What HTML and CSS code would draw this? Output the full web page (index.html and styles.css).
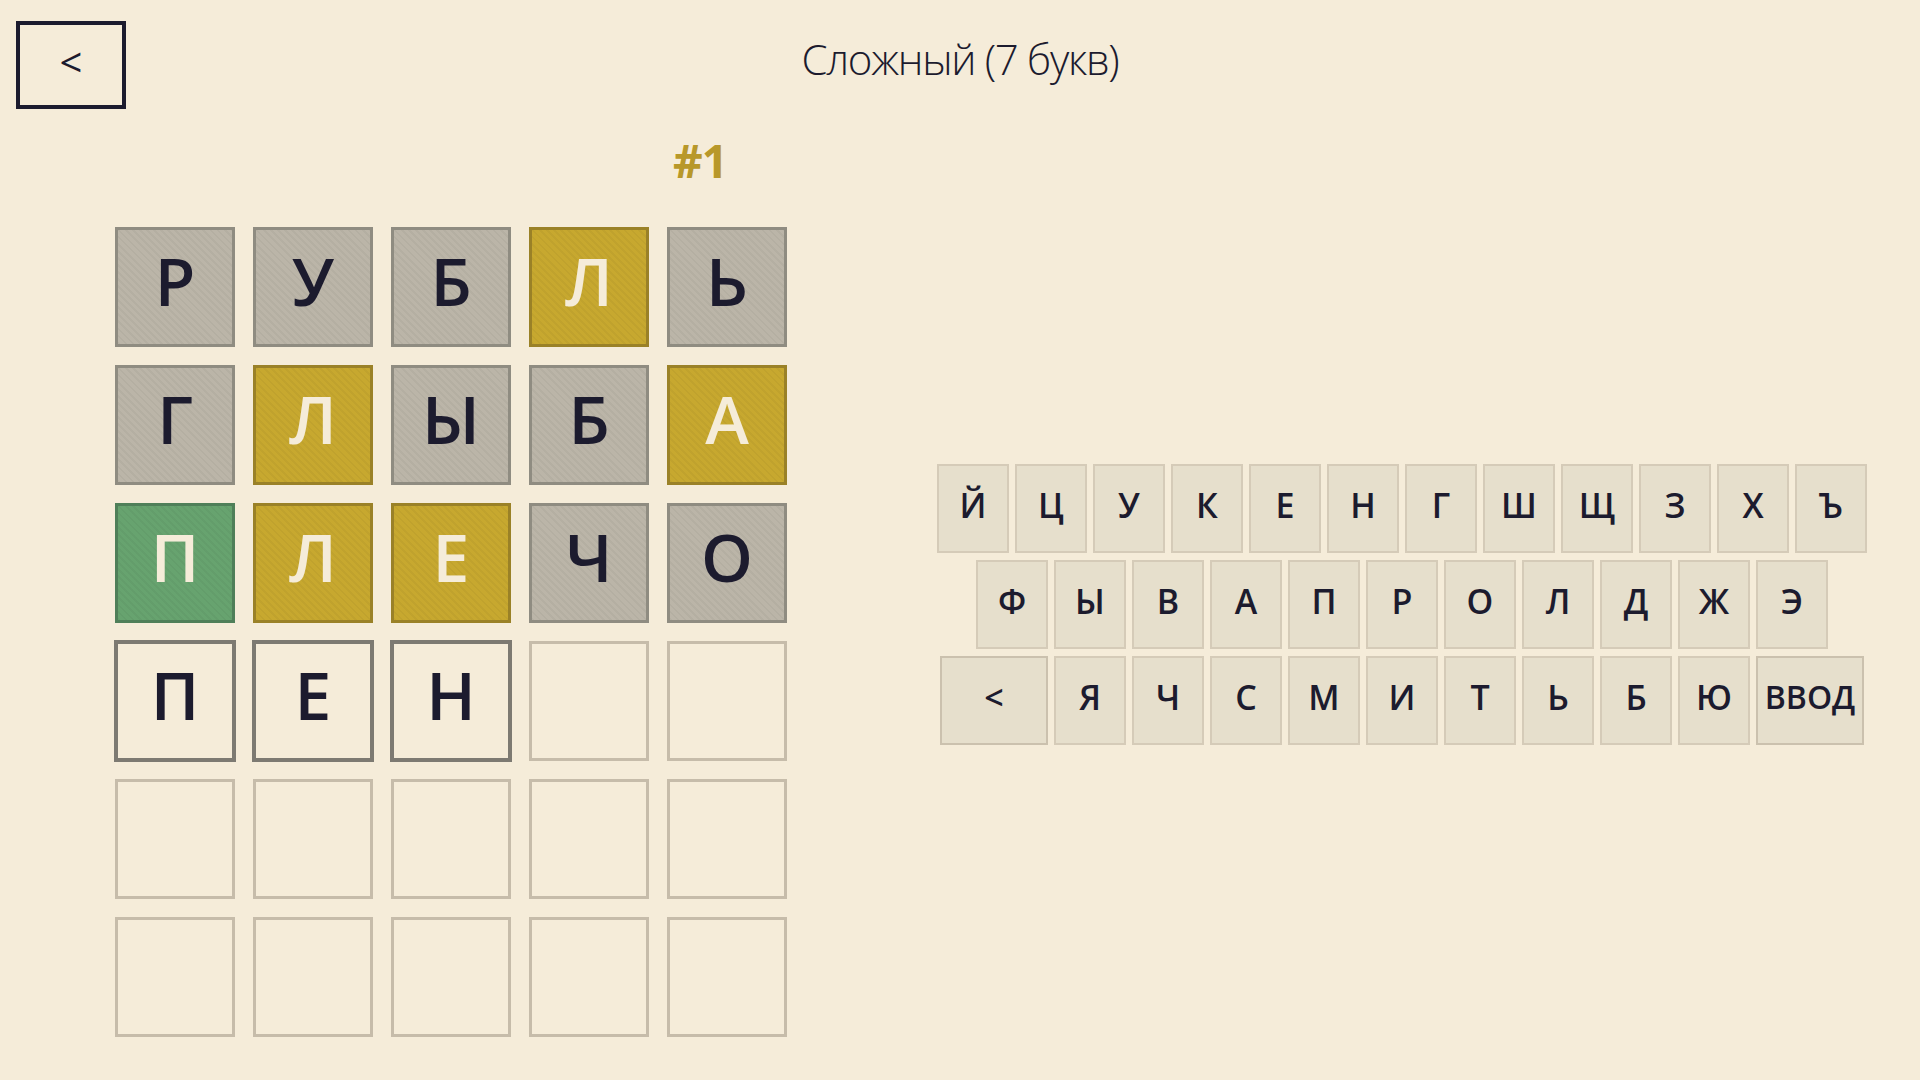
FILE: index.html
```html
<!DOCTYPE html>
<html lang="ru">
<head>
<meta charset="utf-8">
<title>Сложный (7 букв)</title>
<link rel="stylesheet" href="styles.css">
</head>
<body>
<header class="top">
  <button class="back">&lt;</button>
  <h1 class="title">Сложный (7 букв)</h1>
  <div class="spacer"></div>
</header>
<main class="game">
  <section class="board-col">
    <div class="round">#1</div>
    <div class="board">
      <div class="tile absent">Р</div><div class="tile absent">У</div><div class="tile absent">Б</div><div class="tile present">Л</div><div class="tile absent">Ь</div>
      <div class="tile absent">Г</div><div class="tile present">Л</div><div class="tile absent">Ы</div><div class="tile absent">Б</div><div class="tile present">А</div>
      <div class="tile correct">П</div><div class="tile present">Л</div><div class="tile present">Е</div><div class="tile absent">Ч</div><div class="tile absent">О</div>
      <div class="tile filled">П</div><div class="tile filled">Е</div><div class="tile filled">Н</div><div class="tile active"></div><div class="tile active"></div>
      <div class="tile"></div><div class="tile"></div><div class="tile"></div><div class="tile"></div><div class="tile"></div>
      <div class="tile"></div><div class="tile"></div><div class="tile"></div><div class="tile"></div><div class="tile"></div>
    </div>
  </section>
  <section class="keyboard">
    <div class="krow">
      <button class="key">Й</button><button class="key">Ц</button><button class="key">У</button><button class="key">К</button><button class="key">Е</button><button class="key">Н</button><button class="key">Г</button><button class="key">Ш</button><button class="key">Щ</button><button class="key">З</button><button class="key">Х</button><button class="key">Ъ</button>
    </div>
    <div class="krow">
      <button class="key">Ф</button><button class="key">Ы</button><button class="key">В</button><button class="key">А</button><button class="key">П</button><button class="key">Р</button><button class="key">О</button><button class="key">Л</button><button class="key">Д</button><button class="key">Ж</button><button class="key">Э</button>
    </div>
    <div class="krow">
      <button class="key wide">&lt;</button><button class="key">Я</button><button class="key">Ч</button><button class="key">С</button><button class="key">М</button><button class="key">И</button><button class="key">Т</button><button class="key">Ь</button><button class="key">Б</button><button class="key">Ю</button><button class="key wide enter">ВВОД</button>
    </div>
  </section>
</main>
</body>
</html>
```

FILE: styles.css
```css
html, body {
  margin: 0;
  padding: 0;
}
body {
  background: #f5ecd9;
  color: #1c1b2e;
  font-family: "Open Sans", "Noto Sans", sans-serif;
  width: 1920px;
  height: 1080px;
  overflow: hidden;
}
.top {
  display: grid;
  grid-template-columns: 110px 1fr 110px;
  align-items: start;
  padding: 21px 16px 0 16px;
  height: 88px;
}
.back {
  box-sizing: border-box;
  width: 110px;
  height: 88px;
  border: 4px solid #1c1b2e;
  background: transparent;
  color: #1c1b2e;
  font-family: "Open Sans", sans-serif;
  font-size: 40px;
  font-weight: 400;
  line-height: 1;
  padding: 0 0 6px 0;
  display: flex;
  align-items: center;
  justify-content: center;
}
.title {
  margin: 0;
  text-align: center;
  font-family: "Open Sans", sans-serif;
  font-weight: 300;
  font-size: 42px;
  line-height: 1;
  padding-top: 17px;
  letter-spacing: -1.3px;
}
.game {
  display: flex;
  align-items: flex-start;
  padding-left: 115px;
}
.board-col {
  display: flex;
  flex-direction: column;
}
.round {
  padding-left: 558px;
  height: 118px;
  color: #b8982a;
  font-family: "Open Sans", sans-serif;
  font-weight: 700;
  font-size: 46px;
  line-height: 1;
  padding-top: 28px;
  box-sizing: border-box;
  letter-spacing: -1px;
}
.board {
  display: grid;
  grid-template-columns: repeat(5, 120px);
  grid-auto-rows: 120px;
  gap: 18px;
}
.tile {
  box-sizing: border-box;
  border: 3px solid #c6bcaa;
  display: flex;
  align-items: center;
  justify-content: center;
  font-family: "Open Sans", sans-serif;
  font-weight: 600;
  font-size: 66px;
  line-height: 1;
  padding-bottom: 14px;
  color: #1c1b2e;
}
.absent, .present, .correct {
  background-image: repeating-linear-gradient(45deg, rgba(0,0,0,0.035) 0 2px, rgba(255,255,255,0) 2px 5px);
}
.absent {
  background-color: #bbb5a8;
  border-color: #8f8c81;
}
.present {
  background-color: #c7a82f;
  border-color: #9a8127;
  color: #f5ecd9;
}
.correct {
  background-color: #67a36f;
  border-color: #4f7f59;
  color: #f5ecd9;
}
.filled {
  border: 4px solid #7d7a72;
  margin: -1px;
}
.keyboard {
  margin-left: 150px;
  margin-top: 355px;
  display: flex;
  flex-direction: column;
  align-items: center;
  gap: 7px;
}
.krow {
  display: flex;
  gap: 6px;
}
.key {
  box-sizing: border-box;
  width: 72px;
  height: 89px;
  background: #e6dfcc;
  border: 2px solid #d5cbb8;
  color: #1c1b2e;
  font-family: "Open Sans", sans-serif;
  font-weight: 600;
  font-size: 34px;
  line-height: 1;
  padding: 0 0 8px 0;
  display: flex;
  align-items: center;
  justify-content: center;
}
.wide {
  width: 108px;
  border-color: #cbc1ae;
}
.enter {
  font-size: 32px;
  letter-spacing: 0;
  padding-left: 0;
  padding-right: 0;
}
```
